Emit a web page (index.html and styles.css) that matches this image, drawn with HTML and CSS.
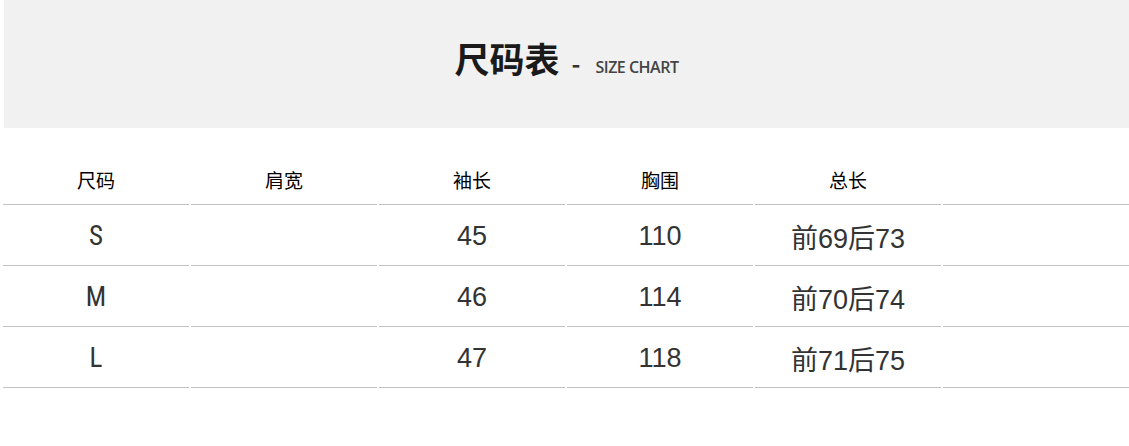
FILE: index.html
```html
<!DOCTYPE html>
<html lang="zh-CN">
<head>
<meta charset="utf-8">
<title>尺码表 - SIZE CHART</title>
<link rel="stylesheet" href="styles.css">
</head>
<body>
<div class="page">
  <header class="banner">
    <h1 class="title">尺码表</h1>
    <span class="dash">-</span>
    <span class="subtitle">SIZE CHART</span>
  </header>
  <table class="chart">
    <thead>
      <tr>
        <th>尺码</th><th>肩宽</th><th>袖长</th><th>胸围</th><th>总长</th><th></th>
      </tr>
    </thead>
    <tbody>
      <tr>
        <td class="size">S</td><td></td><td>45</td><td>110</td><td>前69后73</td><td></td>
      </tr>
      <tr>
        <td class="size">M</td><td></td><td>46</td><td>114</td><td>前70后74</td><td></td>
      </tr>
      <tr>
        <td class="size">L</td><td></td><td>47</td><td>118</td><td>前71后75</td><td></td>
      </tr>
    </tbody>
  </table>
</div>
</body>
</html>
```
FILE: styles.css
```css
html, body {
  margin: 0;
  padding: 0;
  background: #ffffff;
}

body {
  overflow: hidden;
}

.page {
  width: 1129px;
}

.banner {
  margin-left: 4px;
  height: 128px;
  background: #f1f1f1;
  display: flex;
  align-items: baseline;
  justify-content: center;
  padding-top: 38px;
  box-sizing: border-box;
}

.title {
  margin: 0;
  font-family: "Noto Sans CJK SC", sans-serif;
  font-weight: 700;
  font-size: 35px;
  line-height: 40px;
  color: #1a1a1a;
}

.dash {
  font-family: "Noto Sans CJK SC", sans-serif;
  font-weight: 700;
  font-size: 24px;
  color: #333;
  margin: 0 15px 0 12px;
}

.subtitle {
  font-family: "Open Sans", "Noto Sans", sans-serif;
  font-weight: 600;
  font-size: 16px;
  color: #444;
  letter-spacing: -0.5px;
}

.chart {
  margin: 24px 0 0 1px;
  border-collapse: separate;
  border-spacing: 2px;
  table-layout: fixed;
  width: 1130px;
}

.chart th,
.chart td {
  padding: 0;
  text-align: center;
  vertical-align: middle;
  border-bottom: 1px solid #c2c2c2;
}

.chart th {
  height: 50px;
  font-family: "Noto Sans CJK SC", serif;
  font-weight: 400;
  font-size: 19px;
  color: #000;
}

.chart td {
  height: 58px;
  font-family: "Liberation Sans", "Noto Sans CJK SC", sans-serif;
  font-size: 27px;
  color: #333;
}

.chart td.size {
  font-family: "Liberation Sans Narrow", "Roboto Condensed", "Roboto", sans-serif;
}
```
